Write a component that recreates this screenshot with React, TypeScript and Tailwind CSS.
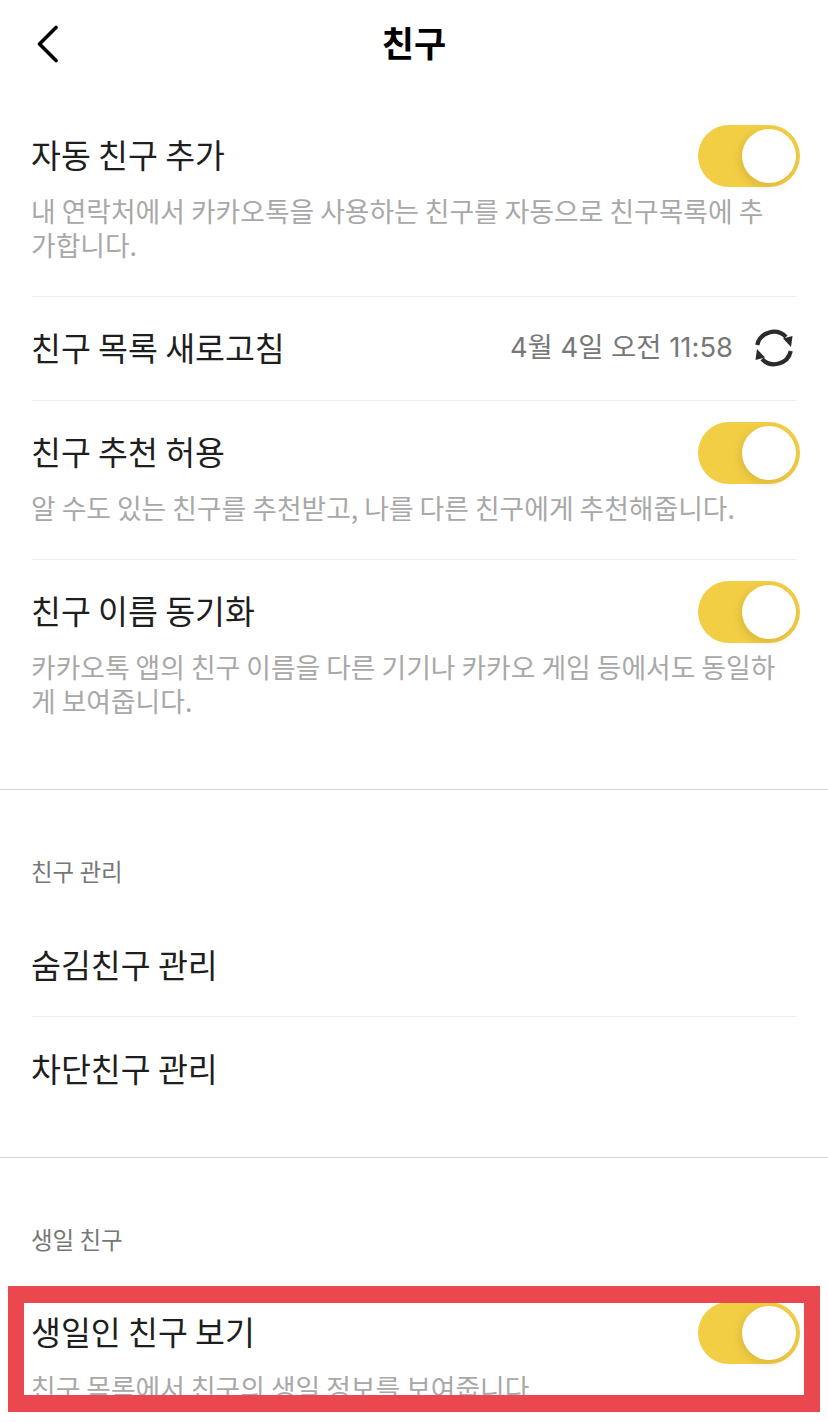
const FONT = "font-['Noto_Sans_CJK_KR','Noto_Sans',sans-serif]";

function Toggle() {
  return (
    <div className="relative h-[62px] w-[102px] shrink-0 rounded-full bg-[#f2ce45]">
      <div className="absolute left-[44px] top-[4px] h-[54px] w-[54px] rounded-full bg-white shadow-[-2px_3px_8px_rgba(120,90,0,0.2)]" />
    </div>
  );
}

function SwitchRow({ title, desc, className }: { title: string; desc: string; className: string }) {
  return (
    <div className={className}>
      <div className="-mr-1 flex h-[62px] items-center justify-between">
        <span className="-ml-px pb-[4px] text-[32.5px] leading-[40px] text-[#1e1e1e]">{title}</span>
        <Toggle />
      </div>
      <p className="-ml-px mt-[7px] pr-[11px] text-[26.8px] leading-[34px] text-[#a8a8a8]">{desc}</p>
    </div>
  );
}

function SyncIcon() {
  return (
    <svg width="38" height="38" viewBox="0 0 38 38" fill="none" className="mt-[2px] shrink-0">
      <path d="M2.200 16A17 17 0 0 1 31 8" stroke="#2b2b2b" strokeWidth="4.200" />
      <path d="M28 9.500L37.500 7l-1.500 11z" fill="#2b2b2b" />
      <path d="M35.800 22A17 17 0 0 1 7 30" stroke="#2b2b2b" strokeWidth="4.200" />
      <path d="M10 28.500L.5 31 2 20z" fill="#2b2b2b" />
    </svg>
  );
}

export default function App() {
  return (
    <div className={`relative h-[1422px] w-[828px] overflow-hidden bg-white ${FONT}`}>
      <header className="relative flex h-[88px] items-center justify-center pb-[4px]">
        <svg width="24" height="38" viewBox="0 0 24 38" fill="none" className="absolute left-[36px] top-[25px]">
          <path d="M20 2.500L3.500 19 20 35.500" stroke="#000" strokeWidth="3.600" strokeLinecap="round" strokeLinejoin="round" />
        </svg>
        <h1 className="text-[35px] font-bold leading-[44px] text-black">친구</h1>
      </header>

      <section className="px-[32px] pt-[37px]">
        <SwitchRow
          className="border-b border-[#eeeeee] pb-[34px]"
          title="자동 친구 추가"
          desc="내 연락처에서 카카오톡을 사용하는 친구를 자동으로 친구목록에 추가합니다."
        />
        <div className="flex h-[104px] items-center justify-between border-b border-[#eeeeee] pb-[4px]">
          <span className="-ml-px text-[32.5px] leading-[40px] text-[#1e1e1e]">친구 목록 새로고침</span>
          <div className="flex items-center gap-[22px] pr-[3px]">
            <span className="font-['Inter','Noto_Sans_CJK_KR',sans-serif] text-[27.4px] leading-[36px] text-[#777777]">4월 4일 오전 11:58</span>
            <SyncIcon />
          </div>
        </div>
        <SwitchRow
          className="border-b border-[#eeeeee] pb-[34px] pt-[21px]"
          title="친구 추천 허용"
          desc="알 수도 있는 친구를 추천받고, 나를 다른 친구에게 추천해줍니다."
        />
        <SwitchRow
          className="pb-[71px] pt-[21px]"
          title="친구 이름 동기화"
          desc="카카오톡 앱의 친구 이름을 다른 기기나 카카오 게임 등에서도 동일하게 보여줍니다."
        />
      </section>

      <section className="border-t border-[#d9d9d9] px-[32px] pt-[65px]">
        <h2 className="-ml-px text-[23.5px] leading-[32px] text-[#777777]">친구 관리</h2>
        <div className="mt-[26px] flex h-[104px] items-center border-b border-[#eeeeee] pb-[2px]">
          <span className="-ml-px text-[32.5px] leading-[40px] text-[#1e1e1e]">숨김친구 관리</span>
        </div>
        <div className="flex h-[104px] items-center pb-[2px]">
          <span className="-ml-px text-[32.5px] leading-[40px] text-[#1e1e1e]">차단친구 관리</span>
        </div>
      </section>

      <section className="mt-[36px] border-t border-[#d9d9d9] px-[32px] pt-[65px]">
        <h2 className="-ml-px text-[23.5px] leading-[32px] text-[#777777]">생일 친구</h2>
        <SwitchRow className="mt-[47px]" title="생일인 친구 보기" desc="친구 목록에서 친구의 생일 정보를 보여줍니다." />
      </section>

      <div className="absolute left-[8px] top-[1286px] h-[126px] w-[812px] border-x-[16px] border-y-[17px] border-[#ea474e]" />
    </div>
  );
}
